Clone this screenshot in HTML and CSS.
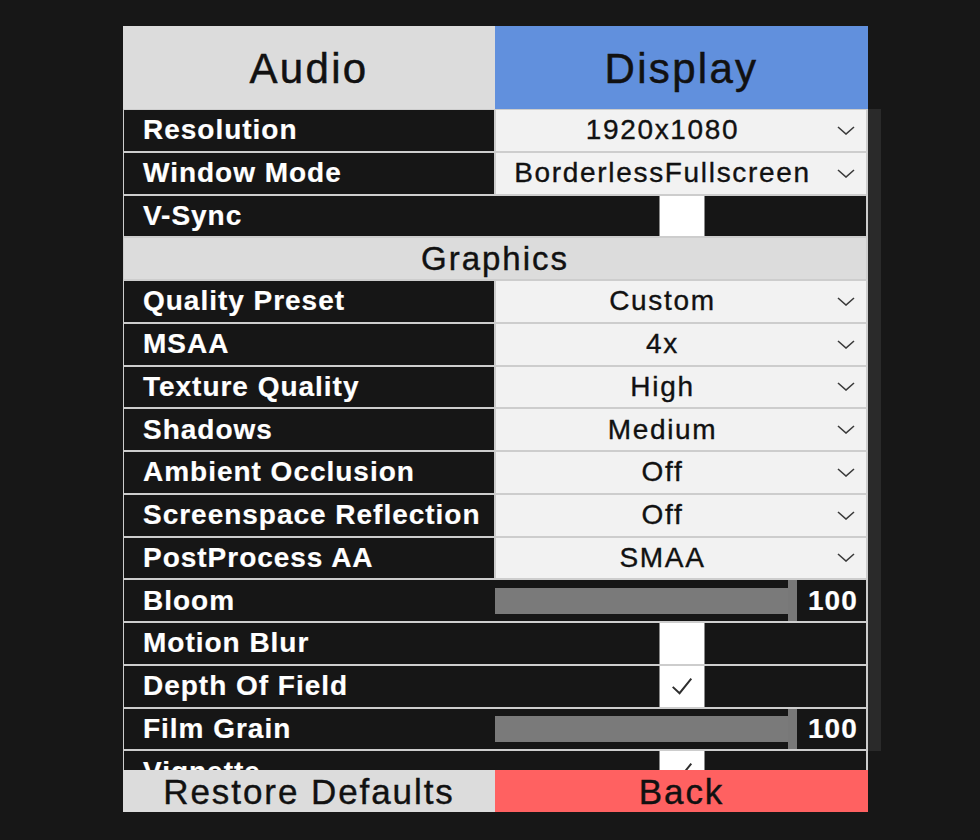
FILE: index.html
```html
<!DOCTYPE html>
<html lang="en">
<head>
<meta charset="utf-8">
<title>Display Settings</title>
<link rel="stylesheet" href="styles.css">
</head>
<body>
<div class="stage">
  <div class="panel">
    <div class="tabs">
      <div class="tab">Audio</div>
      <div class="tab active">Display</div>
    </div>

    <div class="viewport">
      <div class="list">
        <div class="row">
          <div class="label">Resolution</div>
          <div class="dropdown"><span class="dd-text">1920x1080</span><svg class="chev" viewBox="0 0 18 9"><polyline points="1,1 9,8 17,1"/></svg></div>
        </div>
        <div class="row">
          <div class="label">Window Mode</div>
          <div class="dropdown"><span class="dd-text">BorderlessFullscreen</span><svg class="chev" viewBox="0 0 18 9"><polyline points="1,1 9,8 17,1"/></svg></div>
        </div>
        <div class="row dark">
          <div class="label">V-Sync</div>
          <div class="toggle-cell"><div class="checkbox"></div></div>
        </div>
        <div class="section">Graphics</div>
        <div class="row">
          <div class="label">Quality Preset</div>
          <div class="dropdown"><span class="dd-text">Custom</span><svg class="chev" viewBox="0 0 18 9"><polyline points="1,1 9,8 17,1"/></svg></div>
        </div>
        <div class="row">
          <div class="label">MSAA</div>
          <div class="dropdown"><span class="dd-text">4x</span><svg class="chev" viewBox="0 0 18 9"><polyline points="1,1 9,8 17,1"/></svg></div>
        </div>
        <div class="row">
          <div class="label">Texture Quality</div>
          <div class="dropdown"><span class="dd-text">High</span><svg class="chev" viewBox="0 0 18 9"><polyline points="1,1 9,8 17,1"/></svg></div>
        </div>
        <div class="row">
          <div class="label">Shadows</div>
          <div class="dropdown"><span class="dd-text">Medium</span><svg class="chev" viewBox="0 0 18 9"><polyline points="1,1 9,8 17,1"/></svg></div>
        </div>
        <div class="row">
          <div class="label">Ambient Occlusion</div>
          <div class="dropdown"><span class="dd-text">Off</span><svg class="chev" viewBox="0 0 18 9"><polyline points="1,1 9,8 17,1"/></svg></div>
        </div>
        <div class="row">
          <div class="label">Screenspace Reflection</div>
          <div class="dropdown"><span class="dd-text">Off</span><svg class="chev" viewBox="0 0 18 9"><polyline points="1,1 9,8 17,1"/></svg></div>
        </div>
        <div class="row">
          <div class="label">PostProcess AA</div>
          <div class="dropdown"><span class="dd-text">SMAA</span><svg class="chev" viewBox="0 0 18 9"><polyline points="1,1 9,8 17,1"/></svg></div>
        </div>
        <div class="row dark">
          <div class="label">Bloom</div>
          <div class="slider">
            <div class="track"><div class="fill" style="width:100%"></div></div>
            <div class="handle"></div>
            <div class="slider-value">100</div>
          </div>
        </div>
        <div class="row dark">
          <div class="label">Motion Blur</div>
          <div class="toggle-cell"><div class="checkbox"></div></div>
        </div>
        <div class="row dark">
          <div class="label">Depth Of Field</div>
          <div class="toggle-cell"><div class="checkbox"><svg class="check" viewBox="0 0 45 41"><polyline points="13,21 20,27.5 32,12.5"/></svg></div></div>
        </div>
        <div class="row dark">
          <div class="label">Film Grain</div>
          <div class="slider">
            <div class="track"><div class="fill" style="width:100%"></div></div>
            <div class="handle"></div>
            <div class="slider-value">100</div>
          </div>
        </div>
        <div class="row dark">
          <div class="label">Vignette</div>
          <div class="toggle-cell"><div class="checkbox"><svg class="check" viewBox="0 0 45 41"><polyline points="13,21 20,27.5 32,12.5"/></svg></div></div>
        </div>
      </div>
    </div>

    <div class="scrollbar"></div>

    <div class="footer">
      <div class="btn restore">Restore Defaults</div>
      <div class="btn back">Back</div>
    </div>
  </div>
</div>
</body>
</html>
```

FILE: styles.css
```css
* { box-sizing: border-box; }

html, body {
  margin: 0;
  padding: 0;
  background: #171717;
}

body {
  width: 980px;
  height: 840px;
  overflow: hidden;
  font-family: "Liberation Sans", Arial, sans-serif;
}

.stage {
  padding: 26px 0 0 123px;
}

.panel {
  display: grid;
  grid-template-columns: 745px 13px;
  grid-template-rows: 83px 661px 42px;
}

.tabs {
  grid-column: 1;
  grid-row: 1;
  display: grid;
  grid-template-columns: 372px 373px;
}

.tab {
  display: flex;
  align-items: center;
  justify-content: center;
  background: #dcdcdc;
  color: #111;
  font-size: 42px;
  letter-spacing: 0.055em;
  -webkit-text-stroke: 0.5px #111;
  padding-top: 2px;
}

.tab.active {
  background: #6190dd;
}

.viewport {
  grid-column: 1;
  grid-row: 2;
  overflow: hidden;
  background: #cdcdcd;
}

.list {
  display: flex;
  flex-direction: column;
  gap: 2px;
  padding: 1px 2px 0 1px;
}

.row {
  display: grid;
  grid-template-columns: 370px 370px;
  column-gap: 2px;
  height: 40.75px;
  flex-shrink: 0;
}

.row.dark {
  background: #161616;
}

.label {
  display: flex;
  align-items: center;
  background: #161616;
  color: #fff;
  font-weight: bold;
  font-size: 28px;
  letter-spacing: 0.035em;
  -webkit-text-stroke: 0.2px #fff;
  padding-left: 19px;
  white-space: nowrap;
}

.dropdown {
  display: flex;
  align-items: center;
  background: #f2f2f2;
  color: #111;
}

.dd-text {
  flex: 1;
  text-align: center;
  font-size: 28px;
  letter-spacing: 0.06em;
  -webkit-text-stroke: 0.35px #111;
  white-space: nowrap;
}

.chev {
  width: 18px;
  height: 9px;
  margin: 0 11px 0 8px;
  fill: none;
  stroke: #3a3a3a;
  stroke-width: 1.6;
}

.toggle-cell {
  display: flex;
  justify-content: center;
}

.checkbox {
  width: 46px;
  height: 100%;
  background: #fff;
  border-left: 1px solid #8a8a8a;
  border-right: 1px solid #8a8a8a;
  margin-left: 1px;
}

.check {
  display: block;
  width: 44px;
  height: 100%;
  fill: none;
  stroke: #2e2e2e;
  stroke-width: 2;
}

.section {
  flex-shrink: 0;
  height: 40.75px;
  display: flex;
  align-items: center;
  justify-content: center;
  background: #dcdcdc;
  color: #111;
  font-size: 33px;
  letter-spacing: 0.06em;
  -webkit-text-stroke: 0.4px #111;
}

.slider {
  display: flex;
  align-items: stretch;
  margin-left: -1px;
}

.track {
  flex: 1;
  align-self: center;
  height: 26px;
  background: #3a3a3a;
}

.fill {
  height: 100%;
  background: #7a7a7a;
}

.handle {
  width: 9px;
  background: #787878;
}

.slider-value {
  width: 69px;
  display: flex;
  align-items: center;
  justify-content: flex-end;
  padding-right: 8px;
  color: #fff;
  font-weight: bold;
  font-size: 28px;
  letter-spacing: 0.04em;
  -webkit-text-stroke: 0.2px #fff;
}

.scrollbar {
  grid-column: 2;
  grid-row: 2;
  height: 642px;
  background: #2a2a2a;
}

.footer {
  grid-column: 1;
  grid-row: 3;
  display: grid;
  grid-template-columns: 372px 373px;
}

.btn {
  display: flex;
  align-items: center;
  justify-content: center;
  color: #111;
  font-size: 35px;
  letter-spacing: 0.055em;
  -webkit-text-stroke: 0.4px #111;
  padding-top: 2px;
}

.btn.restore {
  background: #dcdcdc;
}

.btn.back {
  background: #ff6161;
}
```
